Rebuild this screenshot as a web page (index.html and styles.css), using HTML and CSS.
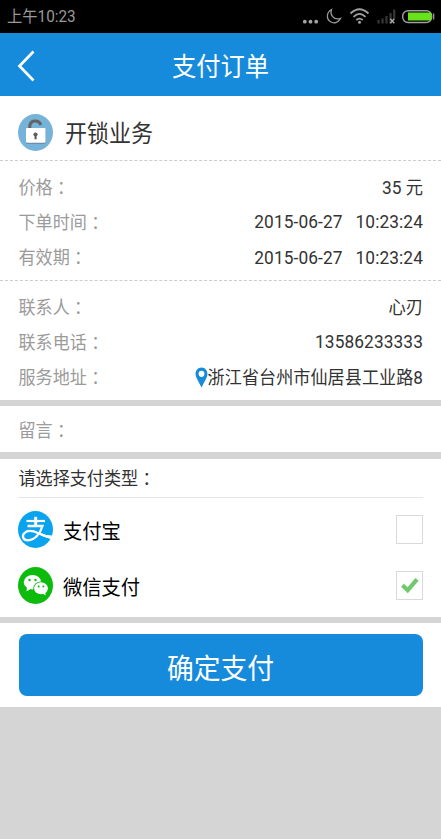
FILE: index.html
```html
<!DOCTYPE html>
<html lang="zh-CN">
<head>
<meta charset="utf-8">
<title>支付订单</title>
<link rel="stylesheet" href="styles.css">
</head>
<body>
<div class="status">
  <span class="clock t">上午10:23</span>
  <svg class="status-icons" width="136" height="33" viewBox="0 0 136 33" fill="none">
    <g fill="#a4a4a4"><circle cx="4.800" cy="21.700" r="1.900"/><circle cx="10.500" cy="21.700" r="1.900"/><circle cx="16.200" cy="21.700" r="1.900"/></g>
    <path d="M31.500 9.500C26.500 12 26 19 30.500 21.800C34.500 24.200 39 22 40.600 18.300C37 19.500 34 18.500 32.300 16.300C30.700 14 30.700 11.500 31.500 9.500Z" stroke="#999" stroke-width="1.300"/>
    <g stroke="#a0a0a0" stroke-width="1.800"><path d="M50.500 13.500Q59.500 5 68.500 13.500"/><path d="M53.500 16.800Q59.500 11 65.500 16.800"/><path d="M56.300 20Q59.500 17.200 62.700 20"/></g>
    <circle cx="59.500" cy="22.200" r="1.500" fill="#a0a0a0"/>
    <path d="M78.500 20v3.500M82.500 18.500v5M86.500 16v7.500M90.500 13v10.500M94.200 9.500v9" stroke="#353535" stroke-width="2.300"/>
    <path d="M90.300 18.700l4 4.500M94.300 18.700l-4 4.500" stroke="#aaa" stroke-width="1.400"/>
    <rect x="102.700" y="10.700" width="29" height="11.800" rx="5.500" stroke="#a0a0a0" stroke-width="1.400"/>
    <path d="M108 12.500H130Q131.500 12.500 131.500 14V19Q131.500 20.500 130 20.500H108Z" fill="#66e31a"/>
    <path d="M133.700 13.500v6" stroke="#a0a0a0" stroke-width="1.200"/>
  </svg>
</div>
<header class="header">
  <svg class="back" width="20" height="32" viewBox="0 0 20 32" fill="none"><path d="M17.500 1.500L3.500 16L17.500 30.500" stroke="#fff" stroke-width="2.700"/></svg>
  <h1 class="t">支付订单</h1>
</header>
<section class="service">
  <svg width="35" height="37" viewBox="0 0 35 37"><ellipse cx="17.500" cy="18.500" rx="17.500" ry="18.500" fill="#76b3d9"/><path d="M11.800 14V12.500C12 5.500 21 5.500 22.800 11" fill="none" stroke="#636363" stroke-width="3"/><rect x="8" y="14.800" width="19.500" height="15" rx="1.200" fill="#66849a"/><rect x="8" y="14" width="19.500" height="14.800" rx="1.200" fill="#fff"/><circle cx="17.500" cy="20.500" r="2.100" fill="#5d5d5d"/><path d="M16.700 20.500h1.700l.3 4.800h-2.300z" fill="#5d5d5d"/></svg>
  <h2 class="t">开锁业务</h2>
</section>
<section class="details dashed">
  <div class="row"><span class="label t">价格<i lang="zh-TW">：</i></span><span class="value t">35 元</span></div>
  <div class="row"><span class="label t">下单时间<i lang="zh-TW">：</i></span><span class="value digits t"><b>2015-06-27</b><b>10:23:24</b></span></div>
  <div class="row"><span class="label t">有效期<i lang="zh-TW">：</i></span><span class="value digits t"><b>2015-06-27</b><b>10:23:24</b></span></div>
</section>
<section class="details contact dashed">
  <div class="row"><span class="label t">联系人<i lang="zh-TW">：</i></span><span class="value t">心刃</span></div>
  <div class="row"><span class="label t">联系电话<i lang="zh-TW">：</i></span><span class="value digits t">13586233333</span></div>
  <div class="row"><span class="label t">服务地址<i lang="zh-TW">：</i></span><span class="address"><svg width="13" height="21" viewBox="0 0 13 21"><path d="M6.500 20.500L1.700 11.300C-1.200 6 1.700.5 6.500.5S14.200 6 11.300 11.300Z" fill="#168adb"/><ellipse cx="6.500" cy="6.800" rx="2.900" ry="3.100" fill="#fff"/></svg><span class="value t">浙江省台州市仙居县工业路8</span></span></div>
</section>
<section class="note"><span class="label t">留言<i lang="zh-TW">：</i></span></section>
<section class="pay">
  <div class="pay-title"><span class="t">请选择支付类型<i lang="zh-TW">：</i></span></div>
  <div class="option">
    <svg width="35" height="37" viewBox="0 0 35 37"><ellipse cx="17.500" cy="18.500" rx="17.500" ry="18.500" fill="#0aa3ed"/><g fill="none" stroke="#fff"><path d="M8.500 10H27" stroke-width="2.200"/><path d="M17.700 5.800V15" stroke-width="3"/><path d="M9.500 15H24.500C22.500 21.500 17.500 29.300 10 29.300C5 29.300 3.500 25 6.500 22C10 18.500 15.500 20 20.500 22.300Q27 25.300 33.500 26.500" stroke-width="2.300"/></g><path d="M21 21.500Q27 24.500 34 24.500L32.800 28Q26 26.500 20 23Z" fill="#fff"/></svg>
    <span class="t">支付宝</span><span class="box"></span>
  </div>
  <div class="option">
    <svg width="35" height="37" viewBox="0 0 35 37"><ellipse cx="17.500" cy="18.500" rx="17.500" ry="18.500" fill="#0dbb0d"/><g fill="#fff"><ellipse cx="14.500" cy="15.200" rx="8.700" ry="7.300"/><path d="M9 20L8.500 24.500L14 21Z"/></g><ellipse cx="23" cy="21.300" rx="7.700" ry="6.800" fill="#0dbb0d"/><ellipse cx="23" cy="21.300" rx="6.900" ry="6" fill="#fff"/><path d="M24 26L27.500 28.500L27.300 24Z" fill="#fff"/><g fill="#0dbb0d"><circle cx="11.500" cy="13" r="1.200"/><circle cx="17.500" cy="13" r="1.200"/><circle cx="20.700" cy="19.500" r="1"/><circle cx="25.300" cy="19.500" r="1"/></g></svg>
    <span class="t">微信支付</span><span class="box"><svg width="18" height="17" viewBox="0 0 18 17"><path d="M1.500 8.300L6.700 13.300L16 2.300" fill="none" stroke="#72c96b" stroke-width="4.200"/></svg></span>
  </div>
</section>
<footer class="footer"><button class="submit"><span class="t">确定支付</span></button></footer>
</body>
</html>
```
FILE: styles.css
```css
* { box-sizing: border-box; }
body {
  margin: 0;
  min-height: 839px;
  background: #d5d5d5;
  color: #333;
  font: 17.1px/1 Roboto, "Noto Sans CJK SC", sans-serif;
}
svg { display: block; flex: none; }
i { display: inline-block; font-family: "Noto Sans CJK TC", sans-serif; font-style: normal; line-height: 1; transform: translateY(1px); }
b { font-weight: 400; }
b + b { margin-left: 13px; }
h1, h2 { margin: 0; font-weight: 400; }
.t { display: inline-block; padding-top: 2px; line-height: 24px; white-space: nowrap; transform: scaleY(1.06); }

.status {
  display: flex;
  justify-content: space-between;
  align-items: center;
  height: 33px;
  padding: 0 5px 0 7px;
  background: #000;
}
.clock { padding-top: 1px; color: #999; font-size: 15.3px; letter-spacing: 0; }

.header {
  display: grid;
  grid-template-columns: 40px 1fr 40px;
  align-items: center;
  height: 63px;
  padding: 3px 16px 0;
  background: #168adb;
  color: #fff;
}
.header h1 { justify-self: center; font-size: 24.3px; }

section, .footer { background: #fff; }
.service { display: flex; align-items: center; height: 64px; padding: 8px 18px 0; }
.service h2 { margin-left: 12px; padding-top: 4px; font-size: 22px; }
.dashed { border-top: 1px dashed #ccc; }
.details { height: 120px; padding: 8px 18px 0; }
.row { display: flex; justify-content: space-between; align-items: center; height: 35.3px; }
.label { margin-left: .5px; color: #9b9b9b; }
.value { font-size: 17.3px; }
.digits { padding-top: 1px; letter-spacing: .1px; }
.address { display: flex; align-items: center; }
.address .value { font-size: 17.1px; letter-spacing: .05px; }

.note { display: flex; align-items: center; height: 46px; margin-top: 6px; padding: 1px 18px 0; }
.pay { height: 158px; margin-top: 7px; padding: 0 18px; }
.pay-title { display: flex; align-items: center; height: 39px; padding-left: .5px; border-bottom: 1px solid #e6e6e6; }
.option { display: flex; align-items: center; height: 56px; padding-top: 6px; color: #000; font-size: 19.3px; }
.option .t { margin-left: 10px; padding-top: 5px; }
.box {
  display: grid;
  place-items: center;
  width: 27px;
  height: 29px;
  margin-left: auto;
  border: 1px solid #d9d9d9;
}

.footer { height: 84px; margin-top: 6px; padding: 11px 18.5px; }
.submit {
  display: grid;
  place-items: center;
  width: 100%;
  height: 62px;
  padding: 5px 0 0;
  border: 0;
  border-radius: 8px;
  background: #168adb;
  color: #fff;
  font: 26.8px/1 Roboto, "Noto Sans CJK SC", sans-serif;
}
```
